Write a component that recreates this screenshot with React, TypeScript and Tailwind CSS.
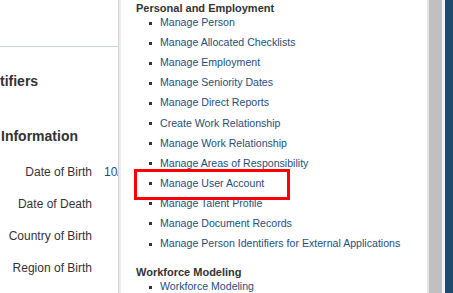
const links = [
  "Manage Person",
  "Manage Allocated Checklists",
  "Manage Employment",
  "Manage Seniority Dates",
  "Manage Direct Reports",
  "Create Work Relationship",
  "Manage Work Relationship",
  "Manage Areas of Responsibility",
  "Manage User Account",
  "Manage Talent Profile",
  "Manage Document Records",
  "Manage Person Identifiers for External Applications",
];

const fields = ["Date of Birth", "Date of Death", "Country of Birth", "Region of Birth"];

export default function App() {
  return (
    <div className="flex h-[293px] w-[453px] overflow-hidden bg-white font-['Liberation_Sans',Arial,sans-serif] text-[12px]">
      <div className="flex w-[118px] shrink-0 flex-col overflow-hidden">
        <div className="h-[47px] shrink-0 border-b border-[#c9d3dd]" />
        <div className="mt-[25px] whitespace-nowrap text-[14px] font-bold leading-[18px] text-[#333]">tifiers</div>
        <div className="mt-[37px] whitespace-nowrap pl-px text-[14px] font-bold leading-[18px] text-[#333]">Information</div>
        <div className="mt-[18px] flex flex-col gap-[14px]">
          {fields.map((f, i) => (
            <div key={f} className="flex h-[18px] items-center whitespace-nowrap">
              <span className="w-[92px] shrink-0 text-right text-[#333]">{f}</span>
              {i === 0 && <span className="ml-[12px] text-[#1f4e79]">10/</span>}
            </div>
          ))}
        </div>
      </div>
      <div className="w-px shrink-0 bg-[#d4d4d4]" />
      <div className="w-[2px] shrink-0 bg-[#ececec]" />
      <div className="min-w-0 flex-1 overflow-hidden pl-[15px] pt-px text-[#333]">
        <div className="text-[11px] font-bold leading-[14px]">Personal and Employment</div>
        <ul className="-mt-[2px] ml-[13px] text-[10.6px]">
          {links.map((l) => (
            <li key={l} className="flex h-[20.1px] items-center whitespace-nowrap">
              <span className="mr-[8px] h-[3px] w-[3px] shrink-0 bg-[#333]" />
              {l === "Manage User Account" ? (
                <span className="relative text-[#1f4e79]">
                  {l}
                  <span className="absolute left-[-26px] top-[-7px] h-[31px] w-[156px] border-[3px] border-[#ff0000]" />
                </span>
              ) : (
                <span className="text-[#1f4e79]">{l}</span>
              )}
            </li>
          ))}
        </ul>
        <div className="mt-[11px] text-[11px] font-bold leading-[14px]">Workforce Modeling</div>
        <ul className="ml-[13px] text-[10.6px]">
          <li className="flex h-[16px] items-center whitespace-nowrap">
            <span className="mr-[8px] h-[3px] w-[3px] shrink-0 bg-[#333]" />
            <span className="text-[#1f4e79]">Workforce Modeling</span>
          </li>
        </ul>
      </div>
      <div className="w-[2px] shrink-0 bg-[#e6e6e6]" />
      <div className="w-[13px] shrink-0 bg-[#c0c0c0]" />
      <div className="w-[3px] shrink-0 bg-[#f2f2f2]" />
      <div className="w-[8px] shrink-0 bg-[#1f4a6e]" />
    </div>
  );
}
